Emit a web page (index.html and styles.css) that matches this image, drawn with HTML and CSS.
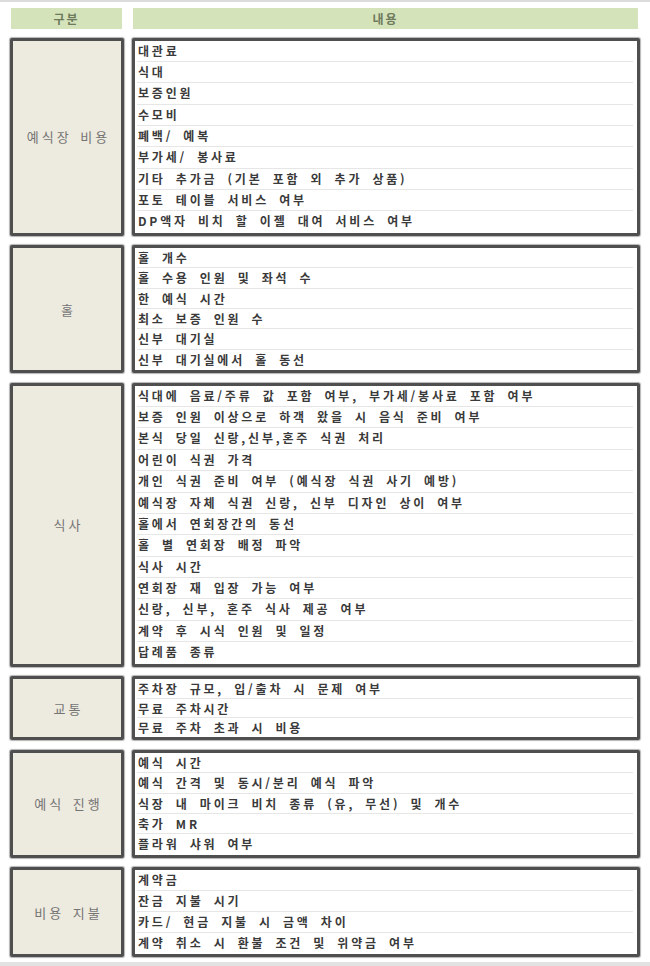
FILE: index.html
```html
<!DOCTYPE html>
<html lang="ko">
<head>
<meta charset="utf-8">
<link rel="stylesheet" href="styles.css">
</head>
<body>
<div class="page">
  <div class="table">
    <div class="head head-left">구분</div>
    <div class="head head-right">내용</div>

    <div class="label">예식장 비용</div>
    <div class="items g-cost">
      <div class="row">대관료</div>
      <div class="row">식대</div>
      <div class="row">보증인원</div>
      <div class="row">수모비</div>
      <div class="row">폐백/ 예복</div>
      <div class="row">부가세/ 봉사료</div>
      <div class="row">기타 추가금 (기본 포함 외 추가 상품)</div>
      <div class="row">포토 테이블 서비스 여부</div>
      <div class="row">DP액자 비치 할 이젤 대여 서비스 여부</div>
    </div>

    <div class="label">홀</div>
    <div class="items g-hall">
      <div class="row">홀 개수</div>
      <div class="row">홀 수용 인원 및 좌석 수</div>
      <div class="row">한 예식 시간</div>
      <div class="row">최소 보증 인원 수</div>
      <div class="row">신부 대기실</div>
      <div class="row">신부 대기실에서 홀 동선</div>
    </div>

    <div class="label">식사</div>
    <div class="items g-meal">
      <div class="row">식대에 음료/주류 값 포함 여부, 부가세/봉사료 포함 여부</div>
      <div class="row">보증 인원 이상으로 하객 왔을 시 음식 준비 여부</div>
      <div class="row">본식 당일 신랑,신부,혼주 식권 처리</div>
      <div class="row">어린이 식권 가격</div>
      <div class="row">개인 식권 준비 여부 (예식장 식권 사기 예방)</div>
      <div class="row">예식장 자체 식권 신랑, 신부 디자인 상이 여부</div>
      <div class="row">홀에서 연회장간의 동선</div>
      <div class="row">홀 별 연회장 배정 파악</div>
      <div class="row">식사 시간</div>
      <div class="row">연회장 재 입장 가능 여부</div>
      <div class="row">신랑, 신부, 혼주 식사 제공 여부</div>
      <div class="row">계약 후 시식 인원 및 일정</div>
      <div class="row">답례품 종류</div>
    </div>

    <div class="label">교통</div>
    <div class="items g-traffic">
      <div class="row">주차장 규모, 입/출차 시 문제 여부</div>
      <div class="row">무료 주차시간</div>
      <div class="row">무료 주차 초과 시 비용</div>
    </div>

    <div class="label">예식 진행</div>
    <div class="items g-ceremony">
      <div class="row">예식 시간</div>
      <div class="row">예식 간격 및 동시/분리 예식 파악</div>
      <div class="row">식장 내 마이크 비치 종류 (유, 무선) 및 개수</div>
      <div class="row">축가 MR</div>
      <div class="row">플라워 샤워 여부</div>
    </div>

    <div class="label">비용 지불</div>
    <div class="items g-pay">
      <div class="row">계약금</div>
      <div class="row">잔금 지불 시기</div>
      <div class="row">카드/ 현금 지불 시 금액 차이</div>
      <div class="row">계약 취소 시 환불 조건 및 위약금 여부</div>
    </div>
  </div>
</div>
</body>
</html>
```

FILE: styles.css
```css
html, body {
  margin: 0;
  padding: 0;
  background: #ffffff;
}

body {
  width: 650px;
  height: 966px;
  overflow: hidden;
  font-family: "Noto Sans CJK KR", "Noto Sans", sans-serif;
  color: #2e2e2e;
}

.page {
  height: 966px;
  box-sizing: border-box;
  border-top: 2px solid #dcdcdc;
  border-bottom: 4px solid #e2e2e2;
  padding: 6px 10px 0 10px;
}

.table {
  display: grid;
  grid-template-columns: 114px 508px;
  column-gap: 8px;
  row-gap: 9.6px;
}

.head {
  background: #d5e3bb;
  height: 21px;
  line-height: 21px;
  text-align: center;
  font-size: 12px;
  font-weight: 700;
  color: #6d7a5c;
  letter-spacing: 2px;
  margin: 0 2px -1px 1px;
}

.label,
.items {
  border: 3px solid #4f4f4f;
  border-radius: 2px;
  box-shadow: 0 0 1px 1px #b5b5b5;
}

.label {
  background: #edeadf;
  display: flex;
  align-items: center;
  justify-content: center;
  font-size: 13px;
  color: #747474;
  letter-spacing: 3px;
  word-spacing: 2px;
  padding-left: 3px;
}

.items {
  background: #ffffff;
  display: flex;
  flex-direction: column;
}

.row {
  box-sizing: border-box;
  height: 21px;
  line-height: 20px;
  margin: 0 4px 0 2px;
  padding-left: 1px;
  font-size: 12px;
  font-weight: 700;
  letter-spacing: 2.8px;
  word-spacing: 4px;
  color: #3a3a3a;
  border-bottom: 1px solid #e6e6e6;
  white-space: nowrap;
  overflow: hidden;
}

.row:last-child {
  border-bottom: none;
}

.g-cost .row { height: 21.33px; }
.g-hall .row { height: 20.33px; }
.g-meal .row { height: 21.38px; }
.g-traffic .row { height: 19.33px; line-height: 19px; }
.g-ceremony .row { height: 20.4px; }
.g-pay .row { height: 21px; }
```
